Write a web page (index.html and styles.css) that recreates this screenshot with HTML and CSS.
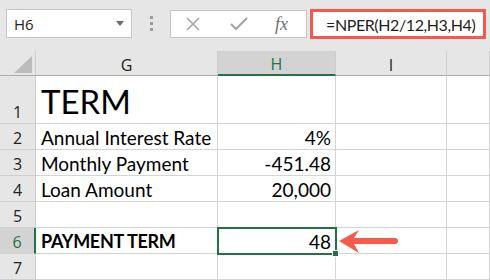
FILE: index.html
```html
<!DOCTYPE html>
<html lang="en">
<head>
  <meta charset="UTF-8">
  <title>NPER - Excel</title>
  <link rel="stylesheet" href="styles.css">
</head>
<body>
  <div class="toolbar">
    <div class="namebox"><span>H6</span><span class="caret"></span></div>
    <div class="grip"><i></i><i></i><i></i></div>
    <div class="fxbtns">
      <svg class="ico" width="16" height="14" viewBox="0 0 16 14"><path d="M2 1 L14 13 M14 1 L2 13" stroke="#a6a6a6" stroke-width="1.6" fill="none"/></svg>
      <svg class="ico" width="18" height="14" viewBox="0 0 18 14"><path d="M1 7 L6 12 L17 1" stroke="#a6a6a6" stroke-width="2.2" fill="none"/></svg>
      <span class="fx">fx</span>
    </div>
    <div class="formula">=NPER(H2/12,H3,H4)</div>
  </div>

  <div class="sheet">
    <div class="hd corner"><span class="tri"></span></div>
    <div class="hd">G</div>
    <div class="hd sel-col">H</div>
    <div class="hd">I</div>
    <div class="hd"></div>

    <div class="rn">1</div>
    <div class="c title">TERM</div>
    <div class="c"></div>
    <div class="c"></div>
    <div class="c"></div>

    <div class="rn">2</div>
    <div class="c">Annual Interest Rate</div>
    <div class="c num">4%</div>
    <div class="c"></div>
    <div class="c"></div>

    <div class="rn">3</div>
    <div class="c">Monthly Payment</div>
    <div class="c num">-451.48</div>
    <div class="c"></div>
    <div class="c"></div>

    <div class="rn">4</div>
    <div class="c">Loan Amount</div>
    <div class="c num">20,000</div>
    <div class="c"></div>
    <div class="c"></div>

    <div class="rn">5</div>
    <div class="c"></div>
    <div class="c"></div>
    <div class="c"></div>
    <div class="c"></div>

    <div class="rn sel-row">6</div>
    <div class="c bold">PAYMENT TERM</div>
    <div class="c num active">48<span class="handle"></span></div>
    <div class="c arrow-cell">
      <svg class="arrow" width="64" height="28" viewBox="0 0 64 28"><path d="M1 13 L21 2 L16 10 L57 10 A3 3 0 0 1 57 16 L16 16 L21 25 Z" fill="#f55a4c"/></svg>
    </div>
    <div class="c"></div>

    <div class="rn">7</div>
    <div class="c"></div>
    <div class="c"></div>
    <div class="c"></div>
    <div class="c"></div>
  </div>
</body>
</html>
```

FILE: styles.css
```css
body {
  margin: 0;
  background: #e6e6e6;
  font-family: 'Lato', sans-serif;
  color: #000;
  overflow: hidden;
}
.toolbar {
  height: 51px;
  box-sizing: border-box;
  padding: 9px 0 0 6px;
  display: flex;
  align-items: flex-start;
}
.namebox {
  width: 126px;
  height: 29px;
  box-sizing: border-box;
  background: #fff;
  border: 1px solid #c6c6c6;
  display: flex;
  align-items: center;
  justify-content: space-between;
  padding: 0 7px 0 7px;
  font-family: 'Open Sans', sans-serif;
  font-size: 15px;
  color: #222;
}
.caret {
  width: 0;
  height: 0;
  border-left: 4px solid transparent;
  border-right: 4px solid transparent;
  border-top: 5px solid #6a6a6a;
}
.grip {
  width: 38px;
  height: 29px;
  display: flex;
  flex-direction: column;
  align-items: center;
  justify-content: center;
  gap: 3px;
}
.grip i {
  width: 3px;
  height: 3px;
  background: #9c9c9c;
}
.fxbtns {
  width: 137px;
  height: 28px;
  margin-top: 1px;
  box-sizing: border-box;
  background: #fff;
  border: 1px solid #c6c6c6;
  display: flex;
  align-items: center;
  padding-left: 14px;
  gap: 29px;
}
.fx {
  font-family: 'Liberation Serif', serif;
  font-style: italic;
  font-size: 18px;
  color: #6f6f6f;
  margin-left: -2px;
}
.formula {
  margin-left: 3px;
  width: 176px;
  height: 30px;
  box-sizing: border-box;
  background: #fff;
  border: 3px solid #f35a4b;
  display: flex;
  align-items: center;
  padding-left: 13px;
  font-size: 16px;
  letter-spacing: -0.4px;
  color: #1e1e1e;
  white-space: nowrap;
}

.sheet {
  display: grid;
  grid-template-columns: 36px 182px 118px 111px 1fr;
  grid-template-rows: 25px 48px repeat(6, 26px);
}
.hd {
  background: #e6e6e6;
  border-right: 1px solid #cdcdcd;
  border-bottom: 1px solid #ababab;
  box-sizing: border-box;
  display: flex;
  justify-content: center;
  align-items: flex-end;
  padding-bottom: 2px;
  font-family: 'Open Sans', sans-serif;
  font-size: 16px;
  line-height: 1;
  color: #222;
}
.corner {
  position: relative;
}
.tri {
  position: absolute;
  right: 3px;
  bottom: 2px;
  width: 18px;
  height: 17px;
  background: #bcbcbc;
  clip-path: polygon(100% 0, 100% 100%, 0 100%);
}
.sel-col {
  background: #d3d3d3;
  border-bottom: 2px solid #217346;
  color: #217346;
}
.rn {
  background: #e6e6e6;
  border-right: 1px solid #cdcdcd;
  border-bottom: 1px solid #d0d0d0;
  box-sizing: border-box;
  display: flex;
  justify-content: center;
  align-items: flex-end;
  padding-bottom: 3px;
  font-family: 'Open Sans', sans-serif;
  font-size: 16px;
  line-height: 1;
  color: #222;
}
.sel-row {
  background: #d3d3d3;
  border-right: 2px solid #217346;
  color: #217346;
}
.c {
  background: #fff;
  border-right: 1px solid #d4d4d4;
  border-bottom: 1px solid #d4d4d4;
  box-sizing: border-box;
  display: flex;
  align-items: flex-end;
  padding: 0 4px 2px 5px;
  font-size: 19px;
  line-height: 1;
  white-space: nowrap;
}
.title {
  font-size: 33px;
  padding-bottom: 5px;
}
.bold {
  font-weight: bold;
  font-size: 18px;
  letter-spacing: -0.3px;
  padding-bottom: 3px;
}
.num {
  justify-content: flex-end;
}
.active {
  position: relative;
  outline: 2px solid #217346;
  outline-offset: -1px;
  z-index: 2;
}
.handle {
  position: absolute;
  right: -4px;
  bottom: -4px;
  width: 5px;
  height: 5px;
  background: #217346;
  border: 1px solid #fff;
}
.arrow-cell {
  position: relative;
}
.arrow {
  position: absolute;
  left: 2px;
  top: 0;
}
```
